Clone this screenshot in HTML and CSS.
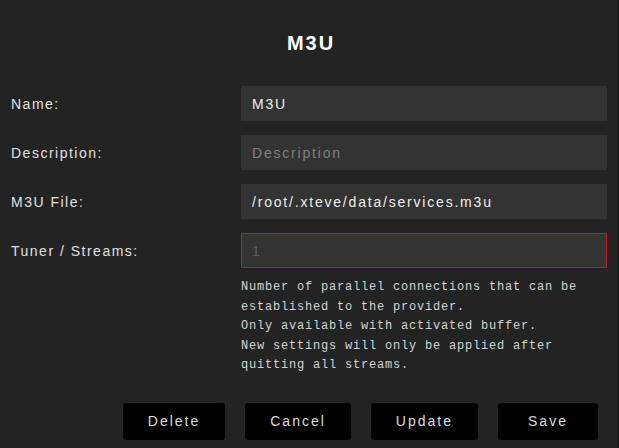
FILE: index.html
```html
<!DOCTYPE html>
<html lang="en">
<head>
  <meta charset="UTF-8" />
  <meta name="viewport" content="width=device-width, initial-scale=1.0" />
  <title>M3U</title>
  <link rel="stylesheet" href="styles.css">
</head>
<body>
  <div class="popup">
    <h1 class="popup-title">M3U</h1>

    <div class="form">
      <label class="form-label" for="name">Name:</label>
      <input class="form-input" type="text" id="name" value="M3U">

      <label class="form-label" for="description">Description:</label>
      <input class="form-input" type="text" id="description" placeholder="Description">

      <label class="form-label" for="file">M3U File:</label>
      <input class="form-input" type="text" id="file" value="/root/.xteve/data/services.m3u">

      <label class="form-label" for="tuner">Tuner / Streams:</label>
      <div>
        <input class="form-input invalid" type="text" id="tuner" placeholder="1">
        <p class="hint">Number of parallel connections that can be established to the provider.<br>Only available with activated buffer.<br>New settings will only be applied after quitting all streams.</p>
      </div>
    </div>

    <div class="buttons">
      <button class="btn">Delete</button>
      <button class="btn">Cancel</button>
      <button class="btn">Update</button>
      <button class="btn">Save</button>
    </div>
  </div>
</body>
</html>
```

FILE: styles.css
```css
html, body {
  margin: 0;
  height: 100%;
}

body {
  background-color: #232323;
  font-family: Arial, "Liberation Sans", sans-serif;
  color: #ddd;
}

.popup {
  height: 100%;
  box-sizing: border-box;
  border-right: 1px solid #141414;
  padding: 31px 11px 0 11px;
}

.popup-title {
  margin: 0 0 31px 0;
  text-align: center;
  font-size: 20px;
  line-height: 24px;
  letter-spacing: 2px;
  color: #fff;
  font-weight: bold;
  padding-left: 4px;
}

.form {
  display: grid;
  grid-template-columns: 230px 1fr;
  row-gap: 14px;
  align-items: start;
}

.form-label {
  font-size: 14px;
  line-height: 35px;
  padding-top: 1px;
  height: 34px;
  letter-spacing: 1.5px;
  color: #e0e0e0;
}

.form-input {
  display: block;
  width: 100%;
  height: 35px;
  box-sizing: border-box;
  margin: 0;
  border: none;
  outline: none;
  background-color: #333;
  color: #eee;
  font-family: Arial, "Liberation Sans", sans-serif;
  font-size: 14px;
  letter-spacing: 1.8px;
  padding: 0 11px;
}

.form-input::placeholder {
  color: #808080;
}

.form-input.invalid {
  border: 1px solid #c41a1a;
  padding: 0 10px;
}

.form-input.invalid::placeholder {
  color: #5e5e5e;
}

.hint {
  margin: 10px 0 0 0;
  font-family: "Courier New", "Liberation Mono", monospace;
  font-size: 12px;
  line-height: 19.5px;
  letter-spacing: 0.8px;
  color: #d4d4d4;
}

.buttons {
  display: flex;
  justify-content: flex-end;
  gap: 20px;
  margin-top: 27px;
  padding-right: 9px;
}

.btn {
  min-width: 100px;
  height: 37px;
  padding: 0 25px;
  background-color: #000;
  color: #ddd;
  border: none;
  border-radius: 3px;
  font-family: Arial, "Liberation Sans", sans-serif;
  font-size: 14px;
  letter-spacing: 2px;
  cursor: pointer;
}
```
